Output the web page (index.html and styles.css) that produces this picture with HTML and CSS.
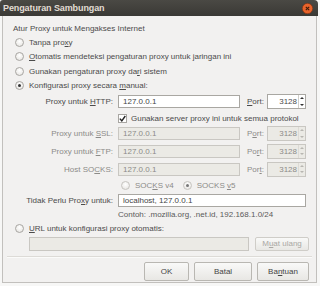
FILE: index.html
```html
<!DOCTYPE html>
<html>
<head>
<meta charset="utf-8">
<link rel="stylesheet" href="styles.css">
</head>
<body>
<div class="win">
  <div class="titlebar">
    <span class="title">Pengaturan Sambungan</span>
    <span class="close"><svg width="11" height="11" viewBox="0 0 11 11"><circle cx="5.5" cy="5.5" r="5.2" fill="#e8632b" stroke="#7a2f10" stroke-width="0.6"/><path d="M3.8 3.8 L7.2 7.2 M7.2 3.8 L3.8 7.2" stroke="#3a1a0a" stroke-width="1.1"/></svg></span>
  </div>
  <div class="body">
    <div class="heading">Atur Proxy untuk Mengakses Internet</div>
    <div class="opt"><span class="radio"></span><span>Tanpa pro<u>x</u>y</span></div>
    <div class="opt"><span class="radio"></span><span><u>O</u>tomatis mendeteksi pengaturan proxy untuk jaringan ini</span></div>
    <div class="opt"><span class="radio"></span><span>Gunakan pengaturan proxy da<u>r</u>i sistem</span></div>
    <div class="opt"><span class="radio on"></span><span>Konfigurasi proxy secara <u>m</u>anual:</span></div>

    <div class="frow r-http">
      <span class="lbl">Proxy untuk <u>H</u>TTP:</span>
      <span class="inp">127.0.0.1</span>
      <span class="plbl"><u>P</u>ort:</span>
      <span class="spin"><span class="num">3128</span><span class="arrows"><i class="up"></i><i class="dn"></i></span></span>
    </div>
    <div class="crow"><span class="check"><svg width="7" height="7" viewBox="0 0 7 7"><path d="M0.8 3.6 L2.8 5.8 L6.3 1" fill="none" stroke="#222" stroke-width="1.4"/></svg></span><span>Gunakan server proxy ini untuk semua protokol</span></div>
    <div class="frow dis r-ssl">
      <span class="lbl">Proxy untuk <u>S</u>SL:</span>
      <span class="inp">127.0.0.1</span>
      <span class="plbl">P<u>o</u>rt:</span>
      <span class="spin"><span class="num">3128</span><span class="arrows"><i class="up"></i><i class="dn"></i></span></span>
    </div>
    <div class="frow dis r-ftp">
      <span class="lbl">Proxy untuk <u>F</u>TP:</span>
      <span class="inp">127.0.0.1</span>
      <span class="plbl">Po<u>r</u>t:</span>
      <span class="spin"><span class="num">3128</span><span class="arrows"><i class="up"></i><i class="dn"></i></span></span>
    </div>
    <div class="frow dis r-socks">
      <span class="lbl">Host SO<u>C</u>KS:</span>
      <span class="inp">127.0.0.1</span>
      <span class="plbl">Por<u>t</u>:</span>
      <span class="spin"><span class="num">3128</span><span class="arrows"><i class="up"></i><i class="dn"></i></span></span>
    </div>
    <div class="vrow dis">
      <span class="ropt"><span class="radio"></span><span>SOC<u>K</u>S v4</span></span>
      <span class="ropt"><span class="radio on"></span><span>SOCKS <u>v</u>5</span></span>
    </div>
    <div class="frow r-no">
      <span class="lbl">Tidak Perlu Pro<u>x</u>y untuk:</span>
      <span class="inp wide">localhost, 127.0.0.1</span>
    </div>
    <div class="hint">Contoh: .mozilla.org, .net.id, 192.168.1.0/24</div>
    <div class="opt url"><span class="radio"></span><span><u>U</u>RL untuk konfigurasi proxy otomatis:</span></div>
    <div class="urlrow">
      <span class="inp urlinp"></span>
      <span class="btn dbtn">M<u>u</u>at ulang</span>
    </div>
    <div class="sep"></div>
    <div class="btns">
      <span class="btn b-ok">OK</span>
      <span class="btn b-batal">Batal</span>
      <span class="btn b-help">Ba<u>n</u>tuan</span>
    </div>
  </div>
</div>
</body>
</html>
```

FILE: styles.css
```css
html, body {
  margin: 0;
  padding: 0;
  background: #f7f7f6;
}
body {
  width: 320px;
  height: 286px;
  overflow: hidden;
  font-family: "Liberation Sans", Arial, sans-serif;
  font-size: 8px;
  color: #4b4b4b;
}
u { text-decoration: underline; text-underline-offset: 1px; }
.win {
  width: 318px;
}
.titlebar {
  height: 16px;
  background: linear-gradient(#4a4944, #3a3935);
  border-radius: 3px 4px 0 0;
  display: flex;
  align-items: center;
  justify-content: space-between;
  padding: 0 5px 0 3px;
  box-sizing: border-box;
}
.title {
  color: #e2ddd4;
  font-size: 9px;
  font-weight: bold;
  letter-spacing: -0.1px;
}
.close { display: flex; }
.body {
  margin-left: 2px;
  width: 315px;
  height: 267px;
  box-sizing: border-box;
  background: #f2f1f0;
  border-left: 1px solid #c2c0bd;
  border-right: 1px solid #c2c0bd;
  border-bottom: 1px solid #c2c0bd;
  display: flex;
  flex-direction: column;
}
.heading {
  height: 12px;
  line-height: 12px;
  margin-top: 7px;
  padding-left: 10px;
}
.opt {
  height: 14.5px;
  display: flex;
  align-items: center;
  padding-left: 12px;
  gap: 5px;
}
.radio {
  width: 9px;
  height: 9px;
  box-sizing: border-box;
  border-radius: 50%;
  border: 1px solid #a8a6a2;
  background: radial-gradient(circle at 50% 35%, #ffffff, #e4e2de);
  display: inline-flex;
  align-items: center;
  justify-content: center;
  flex: none;
}
.radio.on::after {
  content: "";
  width: 3px;
  height: 3px;
  border-radius: 50%;
  background: #333;
}
.frow {
  height: 15px;
  display: flex;
  align-items: center;
}
.r-http { margin-top: 1px; }
.r-ssl { margin-top: 0; }
.r-ftp { margin-top: 2.5px; }
.r-socks { margin-top: 3px; }
.r-no { margin-top: 0; }
.lbl {
  width: 110px;
  text-align: right;
  flex: none;
}
.inp {
  margin-left: 5px;
  width: 122px;
  height: 13px;
  box-sizing: border-box;
  border: 1px solid #a9a7a2;
  background: #fff;
  display: flex;
  align-items: center;
  padding-left: 4px;
  color: #444;
  flex: none;
}
.inp.wide { width: 188px; }
.plbl {
  margin-left: 7px;
  width: 20px;
  flex: none;
}
.spin {
  width: 39px;
  height: 15px;
  box-sizing: border-box;
  border: 1px solid #a9a7a2;
  background: #fff;
  display: flex;
  align-items: center;
  justify-content: flex-end;
  flex: none;
}
.num { padding-right: 1px; }
.arrows {
  width: 6px;
  height: 13px;
  display: flex;
  flex-direction: column;
  justify-content: space-around;
  align-items: center;
  border-left: 1px solid #d0cec9;
}
.arrows i {
  width: 0;
  height: 0;
  border-left: 2px solid transparent;
  border-right: 2px solid transparent;
}
.arrows .up { border-bottom: 2px solid #333; }
.arrows .dn { border-top: 2px solid #333; }
.dis .lbl, .dis .plbl, .dis .inp, .dis .num, .vrow.dis { color: #8c8b88; }
.dis .inp, .dis .spin { background: #ebeae5; border-color: #c9c7c2; }
.dis .arrows .up { border-bottom-color: #b8b6b1; }
.dis .arrows .dn { border-top-color: #b8b6b1; }
.dis .arrows { border-left-color: #dcdad5; }
.crow {
  height: 16px;
  margin-top: 1px;
  display: flex;
  align-items: center;
  padding-left: 115px;
  gap: 4px;
}
.check {
  width: 9px;
  height: 9px;
  box-sizing: border-box;
  border: 1px solid #a8a6a2;
  background: #fff;
  display: flex;
  align-items: center;
  justify-content: center;
}
.vrow {
  height: 15px;
  display: flex;
  align-items: center;
  padding-left: 118px;
  gap: 9px;
  margin-top: 1px;
}
.vrow .ropt { display: flex; align-items: center; gap: 5px; }
.vrow .radio { border-color: #c6c4c0; }
.vrow .radio.on::after { background: #777; }
.hint {
  height: 13px;
  line-height: 13px;
  padding-left: 115px;
  color: #5a5a5a;
}
.opt.url { margin-top: 1px; }
.urlrow {
  display: flex;
  align-items: center;
  padding-left: 26px;
  gap: 6px;
  height: 15px;
}
.urlinp {
  margin-left: 0;
  width: 220px;
  height: 14px;
  background: #ebeae5;
  border-color: #c9c7c2;
}
.btn {
  display: flex;
  align-items: center;
  justify-content: center;
  box-sizing: border-box;
  border: 1px solid #b9b7b2;
  border-radius: 2px;
  background: linear-gradient(#f9f9f8, #e8e7e4);
  color: #444;
  flex: none;
}
.dbtn {
  width: 54px;
  height: 14px;
  color: #aaa8a4;
  border-color: #cfcdc8;
}
.sep {
  margin: 5px 4px 0 4px;
  height: 0;
  border-top: 1px solid #dddbd7;
  border-bottom: 1px solid #fbfbfa;
}
.btns {
  display: flex;
  justify-content: flex-end;
  gap: 5px;
  padding-right: 7px;
  margin-top: 4px;
}
.btns .btn { height: 19px; }
.b-ok { width: 45px; }
.b-batal { width: 58px; }
.b-help { width: 52px; }
```
